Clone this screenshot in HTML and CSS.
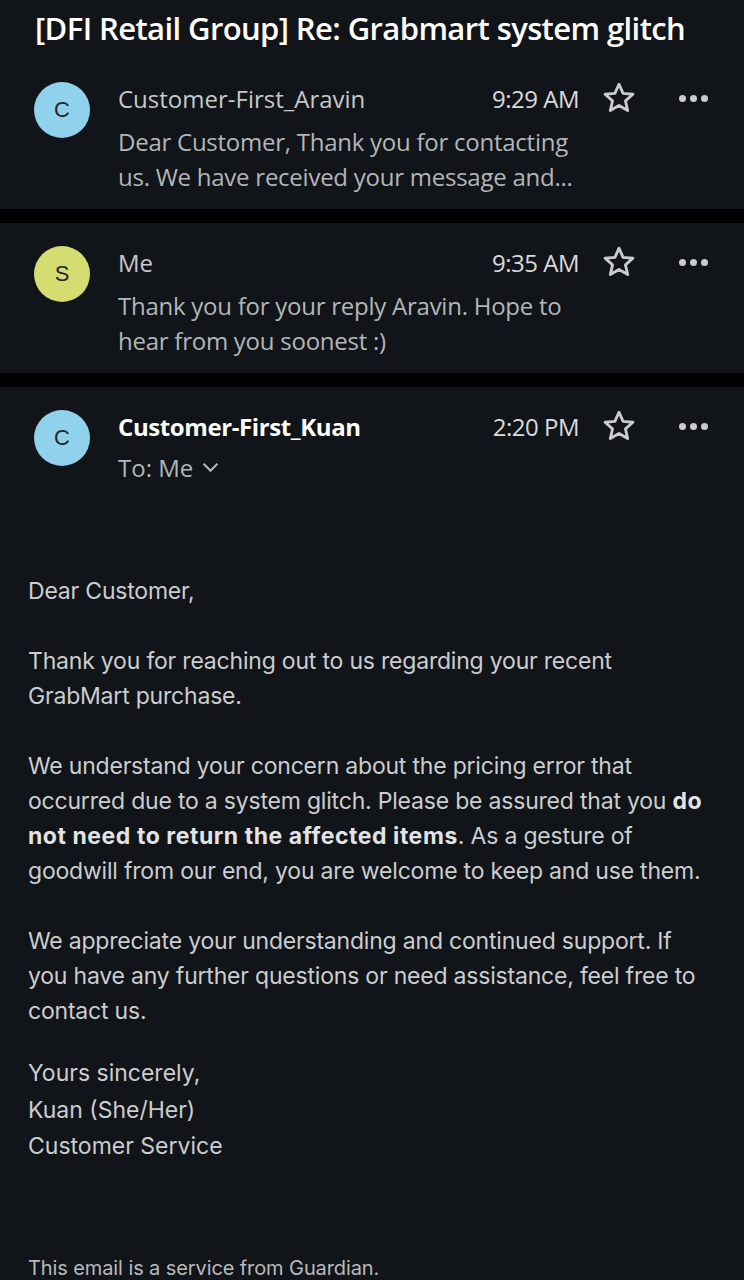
FILE: index.html
```html
<!DOCTYPE html>
<html lang="en">
<head>
  <meta charset="UTF-8">
  <meta name="viewport" content="width=device-width, initial-scale=1.0">
  <title>[DFI Retail Group] Re: Grabmart system glitch</title>
  <link rel="stylesheet" href="styles.css">
</head>
<body>

  <h1 class="subject">[DFI Retail Group] Re: Grabmart system glitch</h1>

  <div class="message">
    <div class="avatar avatar-blue">C</div>
    <div class="message-main">
      <div class="message-head">
        <span class="sender">Customer-First_Aravin</span>
        <span class="time">9:29 AM</span>
        <svg class="star" viewBox="0 0 24 24"><path d="M12 2.8l2.7 6.1 6.6.6-5 4.4 1.5 6.5L12 17l-5.8 3.4 1.5-6.5-5-4.4 6.6-.6z"/></svg>
        <span class="more"><i></i><i></i><i></i></span>
      </div>
      <p class="preview">Dear Customer, Thank you for contacting us. We have received your message and...</p>
    </div>
  </div>

  <div class="divider"></div>

  <div class="message">
    <div class="avatar avatar-lime">S</div>
    <div class="message-main">
      <div class="message-head">
        <span class="sender">Me</span>
        <span class="time">9:35 AM</span>
        <svg class="star" viewBox="0 0 24 24"><path d="M12 2.8l2.7 6.1 6.6.6-5 4.4 1.5 6.5L12 17l-5.8 3.4 1.5-6.5-5-4.4 6.6-.6z"/></svg>
        <span class="more"><i></i><i></i><i></i></span>
      </div>
      <p class="preview">Thank you for your reply Aravin. Hope to hear from you soonest :)</p>
    </div>
  </div>

  <div class="divider"></div>

  <div class="message open">
    <div class="avatar avatar-blue">C</div>
    <div class="message-main">
      <div class="message-head">
        <span class="sender">Customer-First_Kuan</span>
        <span class="time">2:20 PM</span>
        <svg class="star" viewBox="0 0 24 24"><path d="M12 2.8l2.7 6.1 6.6.6-5 4.4 1.5 6.5L12 17l-5.8 3.4 1.5-6.5-5-4.4 6.6-.6z"/></svg>
        <span class="more"><i></i><i></i><i></i></span>
      </div>
      <div class="recipients">To: Me
        <svg class="chevron" viewBox="0 0 16 10"><path d="M1.5 1.5L8 8l6.5-6.5"/></svg>
      </div>
    </div>
  </div>

  <div class="mail-body">
    <p>Dear Customer,</p>
    <p>Thank you for reaching out to us regarding your recent GrabMart purchase.</p>
    <p>We understand your concern about the pricing error that occurred due to a system glitch. Please be assured that you <b>do not need to return the affected items</b>. As a gesture of goodwill from our end, you are welcome to keep and use them.</p>
    <p>We appreciate your understanding and continued support. If you have any further questions or need assistance, feel free to contact us.</p>
    <p class="signature">Yours sincerely,<br>Kuan (She/Her)<br>Customer Service</p>
    <p class="footer-note">This email is a service from Guardian.</p>
  </div>

</body>
</html>
```

FILE: styles.css
```css
body {
  background-color: #111418;
  color: #d0d2d4;
  font-family: "Open Sans", sans-serif;
  margin: 0;
  width: 744px;
  overflow: hidden;
}

.subject {
  margin: 0;
  height: 59px;
  line-height: 56px;
  padding-left: 35px;
  color: #fff;
  font-size: 31px;
  font-weight: 600;
  font-stretch: 95%;
  letter-spacing: -0.6px;
  white-space: nowrap;
}

.message {
  display: flex;
  align-items: flex-start;
  padding: 22px 34px 15px 34px;
}

.avatar {
  flex: none;
  width: 56px;
  height: 56px;
  margin-top: 1px;
  margin-right: 28px;
  border-radius: 50%;
  display: flex;
  align-items: center;
  justify-content: center;
  color: #23272b;
  font-family: "Liberation Sans", Arial, sans-serif;
  font-size: 22px;
}

.avatar-blue {
  background-color: #90d2ec;
}

.avatar-lime {
  background-color: #d5dc70;
}

.message-main {
  flex: 1;
  min-width: 0;
}

.message-head {
  display: flex;
  align-items: center;
  height: 34px;
}

.sender {
  flex: 1;
  font-size: 24px;
  color: #c6c8ca;
}

.open .sender {
  color: #fff;
  font-weight: 700;
  letter-spacing: -0.4px;
}

.time {
  font-size: 24px;
  letter-spacing: -0.5px;
  color: #d8dadc;
}

.star {
  width: 36px;
  height: 36px;
  margin-left: 22px;
  fill: none;
  stroke: #c9cbce;
  stroke-width: 1.9;
  stroke-linejoin: round;
}

.more {
  display: flex;
  gap: 4px;
  margin-left: 42px;
  margin-right: 2px;
}

.more i {
  width: 7px;
  height: 7px;
  border-radius: 50%;
  background-color: #c9cbce;
}

.preview {
  margin: 9px 0 0;
  padding-right: 127px;
  font-size: 24px;
  letter-spacing: -0.25px;
  line-height: 35px;
  color: #b3b6b9;
}

.recipients {
  margin-top: 8px;
  height: 34px;
  line-height: 34px;
  font-size: 24px;
  color: #b3b6b9;
}

.chevron {
  width: 17px;
  height: 11px;
  margin-left: 2px;
  vertical-align: 4px;
  fill: none;
  stroke: #b3b6b9;
  stroke-width: 2;
}

.divider {
  height: 14px;
  background-color: #000;
}

.mail-body {
  padding: 74px 28px 0;
  font-family: Inter, "Liberation Sans", sans-serif;
  font-size: 23px;
  letter-spacing: -0.2px;
  line-height: 35px;
  color: #cbcdcf;
}

.mail-body p {
  margin: 0 0 35px;
}

.mail-body b {
  color: #e2e3e4;
  font-weight: 700;
  letter-spacing: 0.55px;
}

.mail-body .signature {
  margin-top: -9px;
  line-height: 36.5px;
  letter-spacing: 0;
}

.footer-note {
  margin-top: 92px !important;
  font-size: 20px;
  letter-spacing: -0.1px;
  line-height: 22px;
  color: #b8babd;
}
```
